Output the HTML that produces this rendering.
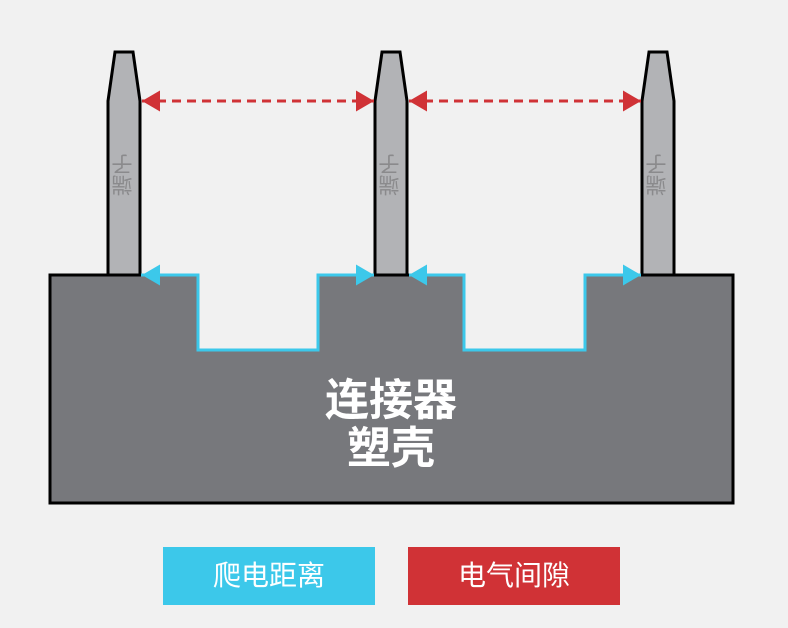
<!DOCTYPE html>
<html><head><meta charset="utf-8"><style>
body{margin:0;width:788px;height:628px;background:#f1f1f1;overflow:hidden;font-family:"Liberation Sans","Noto Sans CJK SC",sans-serif}
.lbl{position:absolute;color:#fff;font-size:44px;font-weight:bold;line-height:48px;text-align:center;left:291px;width:200px}
.leg{position:absolute;top:547px;height:58px;width:212px;color:#fff;font-size:28px;line-height:58px;text-align:center}
.pt{position:absolute;font-size:21px;color:#8a8a8c;writing-mode:vertical-rl;transform:rotate(180deg);line-height:22px}
</style></head><body>
<svg width="788" height="628" style="position:absolute;left:0;top:0">
<defs>
<marker id="r" markerWidth="6" markerHeight="7" refX="6" refY="3.5" orient="auto-start-reverse" markerUnits="strokeWidth"><path d="M0,0L6,3.5L0,7z" fill="#d03236"/></marker>
<marker id="b" markerWidth="6" markerHeight="7" refX="6" refY="3.5" orient="auto-start-reverse" markerUnits="strokeWidth"><path d="M0,0L6,3.5L0,7z" fill="#3cc8ea"/></marker>
</defs>
<path d="M50,275H198V350H318V275H464V350H585V275H733V503H50Z" fill="#77787c" stroke="#000" stroke-width="3"/>
<g fill="#b2b3b6" stroke="#000" stroke-width="3">
<path d="M108,275V101L115,52H133L140,101V275Z"/>
<path d="M375,275V101L382,52H400L407,101V275Z"/>
<path d="M642,275V101L649,52H667L674,101V275Z"/>
</g>
<path d="M141,275H198V350H318V275H374M409,275H464V350H585V275H641" fill="none" stroke="#3cc8ea" stroke-width="3"/>
<line x1="142" y1="275" x2="170" y2="275" stroke="#3cc8ea" stroke-width="3" marker-start="url(#b)"/>
<line x1="345" y1="275" x2="374" y2="275" stroke="#3cc8ea" stroke-width="3" marker-end="url(#b)"/>
<line x1="409" y1="275" x2="440" y2="275" stroke="#3cc8ea" stroke-width="3" marker-start="url(#b)"/>
<line x1="612" y1="275" x2="641" y2="275" stroke="#3cc8ea" stroke-width="3" marker-end="url(#b)"/>
<line x1="142" y1="101" x2="374" y2="101" stroke="#d03236" stroke-width="3" stroke-dasharray="9,6" marker-start="url(#r)" marker-end="url(#r)"/>
<line x1="409" y1="101" x2="641" y2="101" stroke="#d03236" stroke-width="3" stroke-dasharray="9,6" marker-start="url(#r)" marker-end="url(#r)"/>
</svg>
<div class="pt" style="left:113px;top:154px">端子</div>
<div class="pt" style="left:380px;top:154px">端子</div>
<div class="pt" style="left:647px;top:154px">端子</div>
<div class="lbl" style="top:377px">连接器</div>
<div class="lbl" style="top:425px">塑壳</div>
<div class="leg" style="left:163px;background:#3cc8ea">爬电距离</div>
<div class="leg" style="left:408px;background:#d03236">电气间隙</div>
</body></html>
